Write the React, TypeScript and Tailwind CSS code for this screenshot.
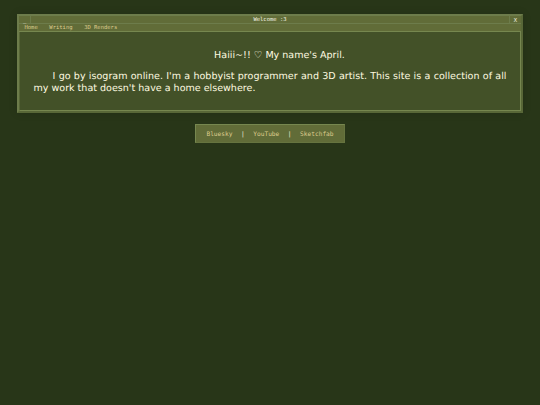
const menu = ['Home', 'Writing', '3D Renders'];
const socials = ['Bluesky', 'YouTube', 'Sketchfab'];

const TitleBar = () => (
  <div className="flex h-[8px] items-stretch border-b border-[#6d7c4b] text-[5.5px] leading-[9px] text-[#f4f4e4]">
    <button className="w-[12px] border-r border-[#6d7c4b] pl-[4px] text-left leading-[6px] text-[#f4f4e4]">_</button>
    <h1 className="flex-1 text-center">Welcome :3</h1>
    <button className="w-[12px] border-l border-[#6d7c4b] text-center leading-[8px]">X</button>
  </div>
);

const Menu = () => (
  <nav className="flex h-[8px] gap-[11.6px] border-b border-[#76874f] pl-[5.5px] text-[5.5px] leading-[8px] text-[#dccb8c]">
    {menu.map((item) => (
      <a key={item} href="#">{item}</a>
    ))}
  </nav>
);

const Footer = () => (
  <footer className="mx-auto mt-[11px] flex h-[19px] w-[150px] items-center justify-center gap-[8.5px] border border-t-[#76874f] border-l-[#76874f] border-r-[#66743f] border-b-[#66743f] bg-[#616c38] pt-[2px] text-[6.2px] text-[#dccb8c]">
    {socials.map((name, i) => (
      <div key={name} className="flex gap-[8.5px]">
        {i > 0 && <span className="text-[#f0f0dc]">|</span>}
        <a href="#">{name}</a>
      </div>
    ))}
  </footer>
);

const App = () => {
  return (
    <div className="min-h-screen bg-[#283618] pt-[14px] font-['DejaVu_Sans_Mono',monospace] [text-rendering:geometricPrecision]">
      <div className="mx-[17px] h-[99px] border-2 border-t-[#6d7c4b] border-l-[#6d7c4b] border-r-[#586737] border-b-[#586737] bg-[#616c38] shadow-[0_0_8px_rgba(0,0,0,0.15)]">
        <TitleBar />
        <Menu />
        <main className="h-[79px] border border-t-0 border-l-[#586737] border-r-[#76874f] border-b-[#76874f] bg-[#435128] px-[13.5px] pt-[18px] font-['DejaVu_Sans',sans-serif] text-[9.56px] leading-[12px] text-[#fefae0]">
          <p className="text-center indent-[19px]">Haiii~!! ♡ My name's April.</p>
          <p className="mt-[9px] text-justify indent-[19px]">
            I go by isogram online. I'm a hobbyist programmer and 3D artist. This site is a collection of all
            my work that doesn't have a home elsewhere.
          </p>
        </main>
      </div>
      <Footer />
    </div>
  );
};

export default App;
